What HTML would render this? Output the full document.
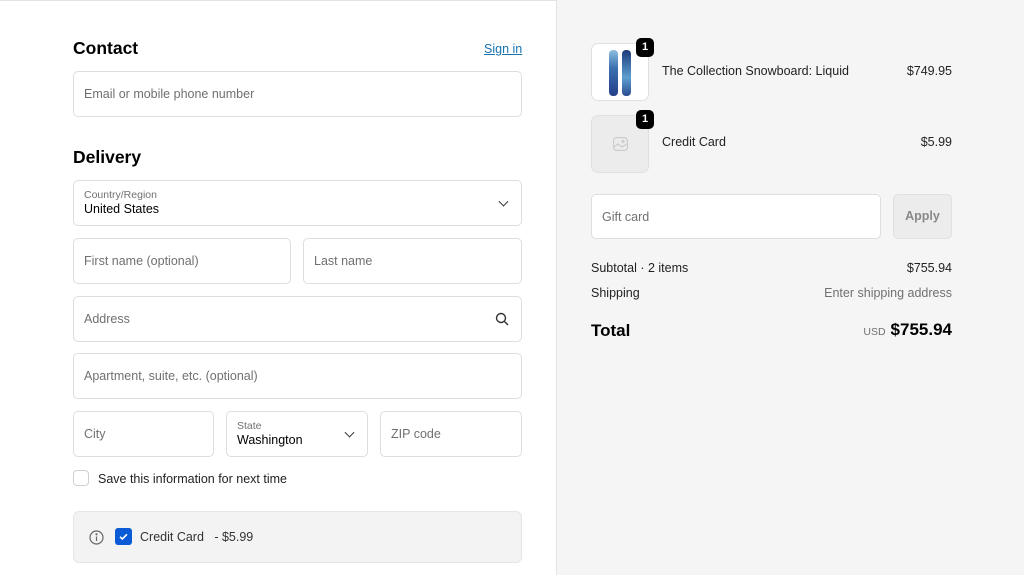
<!DOCTYPE html>
<html><head><style>
*{box-sizing:border-box;margin:0;padding:0}
body{width:1024px;height:575px;overflow:hidden;font-family:"Liberation Sans",sans-serif;color:#000;background:#fff;position:relative;font-size:12.5px}
.abs{position:absolute}
.f{position:absolute;border:1px solid #dedede;border-radius:5px;background:#fff;color:#707070;font-size:12.5px;padding-left:10px;display:flex;align-items:center}
.lab{font-size:10.5px;color:#707070}
.val{font-size:12.5px;color:#000}
h2{position:absolute;font-size:17.5px;font-weight:bold}
.right{position:absolute;left:556px;top:0;width:468px;height:575px;background:#f5f5f5;border-left:1px solid #e3e3e3}
.thumb{position:absolute;width:58px;height:58px;border:1px solid #e0e0e0;border-radius:7px;background:#fff}
.badge{position:absolute;width:18px;height:19px;background:#000;color:#fff;border-radius:5px;font-size:11px;font-weight:bold;text-align:center;line-height:19px}
.chev{position:absolute;right:14px;top:50%;width:7px;height:7px;border-right:1.5px solid #333;border-bottom:1.5px solid #333;transform:translateY(-70%) rotate(45deg)}
</style></head><body>
<div class="abs" style="left:0;top:0;width:1024px;height:1px;background:#e3e3e3"></div>
<h2 style="left:73px;top:38px">Contact</h2>
<div class="abs" style="left:484px;top:42px;color:#1773b0;text-decoration:underline;font-size:12.5px">Sign in</div>
<div class="f" style="left:73px;top:71px;width:449px;height:46px">Email or mobile phone number</div>
<h2 style="left:73px;top:147px">Delivery</h2>
<div class="f" style="left:73px;top:180px;width:449px;height:46px;display:block;padding-top:8px"><div class="lab">Country/Region</div><div class="val" style="margin-top:1px">United States</div><div class="chev"></div></div>
<div class="f" style="left:73px;top:238px;width:218px;height:46px">First name (optional)</div>
<div class="f" style="left:303px;top:238px;width:219px;height:46px">Last name</div>
<div class="f" style="left:73px;top:296px;width:449px;height:46px">Address
<svg class="abs" style="right:12px;top:15px" width="14" height="14" viewBox="0 0 14 14" fill="none" stroke="#333" stroke-width="1.4"><circle cx="6" cy="6" r="4.5"/><path d="M9.5 9.5L13 13"/></svg></div>
<div class="f" style="left:73px;top:353px;width:449px;height:46px">Apartment, suite, etc. (optional)</div>
<div class="f" style="left:73px;top:411px;width:141px;height:46px">City</div>
<div class="f" style="left:226px;top:411px;width:142px;height:46px;display:block;padding-top:8px"><div class="lab">State</div><div class="val" style="margin-top:1px">Washington</div><div class="chev"></div></div>
<div class="f" style="left:380px;top:411px;width:142px;height:46px">ZIP code</div>
<div class="abs" style="left:73px;top:470px;width:16px;height:16px;border:1px solid #d0d0d0;border-radius:4px"></div>
<div class="abs" style="left:98px;top:472px;font-size:12.5px;color:#222">Save this information for next time</div>
<div class="abs" style="left:73px;top:511px;width:449px;height:52px;background:#f3f3f3;border:1px solid #e5e5e5;border-radius:6px"></div>
<svg class="abs" style="left:89px;top:530px" width="15" height="15" viewBox="0 0 15 15" fill="none" stroke="#666" stroke-width="1.2"><circle cx="7.5" cy="7.5" r="6.5"/><path d="M7.5 6.5v4.5"/><circle cx="7.5" cy="4.3" r=".5" fill="#666"/></svg>
<div class="abs" style="left:115px;top:528px;width:17px;height:17px;background:#0b5ad6;border-radius:3px"><svg width="17" height="17" viewBox="0 0 17 17" fill="none" stroke="#fff" stroke-width="1.6"><path d="M5 8.8l2.3 2.2L12 6.3"/></svg></div>
<div class="abs" style="left:140px;top:530px;font-size:12.5px;color:#333">Credit Card&nbsp;&nbsp; - $5.99</div>

<div class="right">
<div class="thumb" style="left:34px;top:43px">
<div class="abs" style="left:17px;top:6px;width:9px;height:46px;border-radius:4px;background:linear-gradient(#8cc0e0,#3a6fb0 40%,#243f8a)"></div>
<div class="abs" style="left:30px;top:6px;width:9px;height:46px;border-radius:4px;background:linear-gradient(#1f3a7a,#5d9fcf 60%,#2a4c90)"></div>
</div>
<div class="badge" style="left:79px;top:38px">1</div>
<div class="abs" style="left:105px;top:64px;font-size:12.5px;color:#222">The Collection Snowboard: Liquid</div>
<div class="abs" style="right:72px;top:64px;font-size:12.5px;color:#222">$749.95</div>
<div class="thumb" style="left:34px;top:115px;background:#ececec">
<svg class="abs" style="left:21px;top:21px" width="15" height="14" viewBox="0 0 15 14" fill="none" stroke="#ccc" stroke-width="1.2"><rect x=".6" y=".6" width="13.8" height="12.8" rx="3"/><path d="M1 10l4-3 4 3 5-3"/><circle cx="10" cy="4.5" r="1"/></svg>
</div>
<div class="badge" style="left:79px;top:110px">1</div>
<div class="abs" style="left:105px;top:135px;font-size:12.5px;color:#222">Credit Card</div>
<div class="abs" style="right:72px;top:135px;font-size:12.5px;color:#222">$5.99</div>
<div class="f" style="left:34px;top:194px;width:290px;height:45px">Gift card</div>
<div class="abs" style="left:336px;top:194px;width:59px;height:45px;background:#ececec;border:1px solid #e0e0e0;border-radius:5px;color:#888;font-weight:bold;font-size:12.5px;text-align:center;line-height:43px">Apply</div>
<div class="abs" style="left:34px;top:261px;font-size:12.5px;color:#222">Subtotal · 2 items</div>
<div class="abs" style="right:72px;top:261px;font-size:12.5px;color:#222">$755.94</div>
<div class="abs" style="left:34px;top:286px;font-size:12.5px;color:#222">Shipping</div>
<div class="abs" style="right:72px;top:286px;font-size:12.5px;color:#707070">Enter shipping address</div>
<div class="abs" style="left:34px;top:321px;font-size:17px;font-weight:bold">Total</div>
<div class="abs" style="right:72px;top:320px;font-size:17px;font-weight:bold"><span style="font-size:10.5px;font-weight:normal;color:#707070;margin-right:5px">USD</span>$755.94</div>
</div>
</body></html>
